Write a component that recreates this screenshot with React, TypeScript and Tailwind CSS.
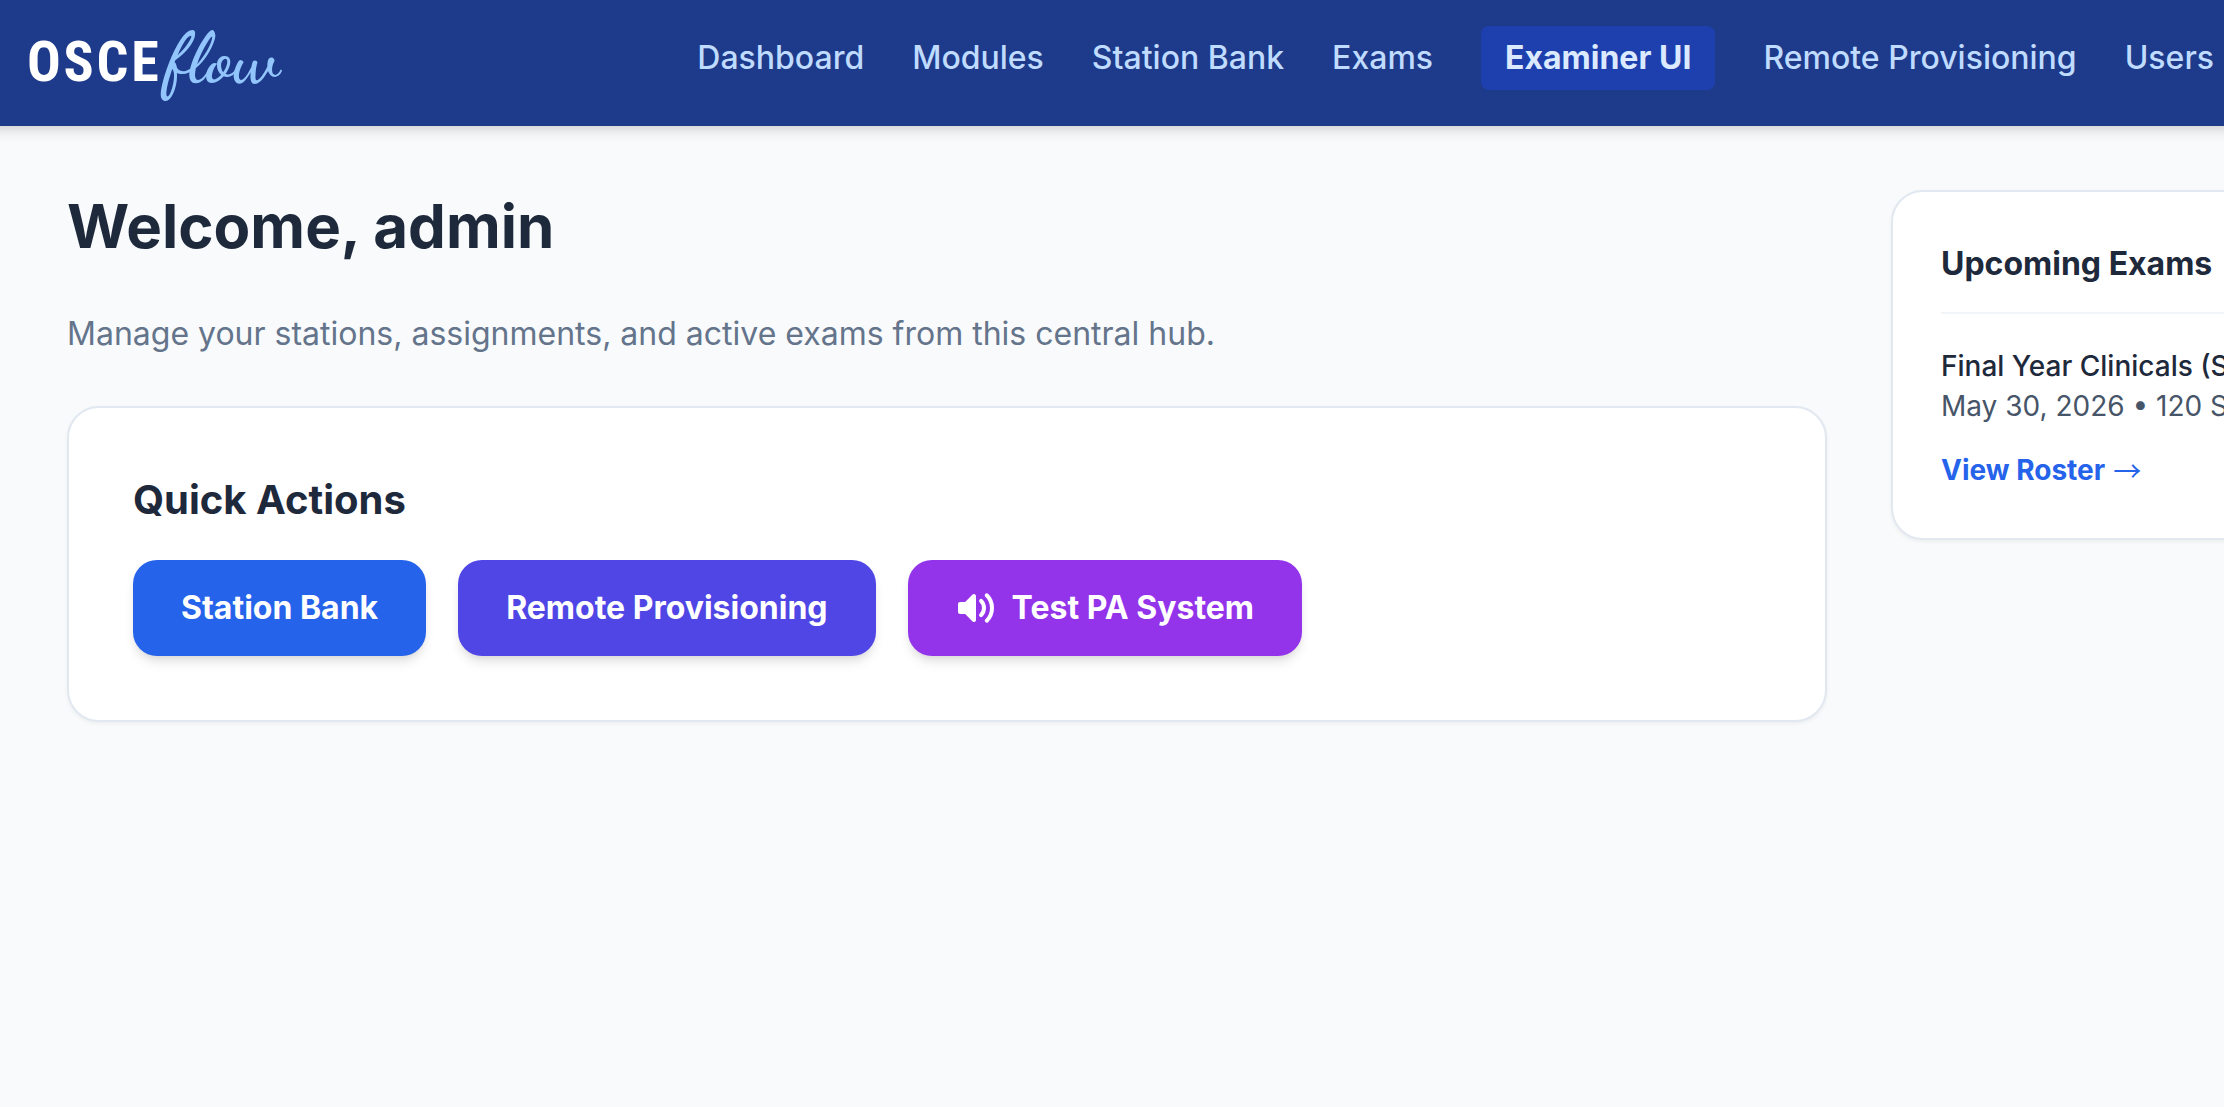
type NavItem = { label: string; active?: boolean };

const NAV_ITEMS: NavItem[] = [
  { label: "Dashboard" },
  { label: "Modules" },
  { label: "Station Bank" },
  { label: "Exams" },
  { label: "Examiner UI", active: true },
  { label: "Remote Provisioning" },
  { label: "Users" },
];

function Logo() {
  return (
    <a href="#home" aria-label="OSCEflow" className="flex items-baseline gap-1 pt-1 whitespace-nowrap leading-[72px]">
      <span className="font-['Roboto_Condensed',Roboto,sans-serif] text-[56px] font-bold tracking-wider text-white">
        OSCE
      </span>
      <span className="font-['Dancing_Script',cursive] text-[72px] font-bold text-[#93c5fd]">flow</span>
    </a>
  );
}

function Header() {
  return (
    <header className="relative -mx-4 flex h-[126px] items-center justify-between bg-[#1e3a8a] pr-[26px] pb-[10px] pl-[43px] shadow-[0_8px_12px_-2px_rgba(0,0,0,0.1),0_4px_8px_-4px_rgba(0,0,0,0.1)]">
      <Logo />
      <nav className="flex shrink-0 items-center gap-12 text-[32px] leading-[48px] whitespace-nowrap">
        {NAV_ITEMS.map((item) => (
          <a
            key={item.label}
            href="#"
            className={
              item.active
                ? "rounded-lg bg-[#1e40af] px-6 py-2 font-bold text-[#dbeafe]"
                : "font-medium text-[#bfdbfe]"
            }
          >
            {item.label}
          </a>
        ))}
      </nav>
    </header>
  );
}

function SpeakerIcon() {
  return (
    <svg viewBox="0 0 20 20" fill="currentColor" className="size-10" aria-hidden="true">
      <path
        fillRule="evenodd"
        clipRule="evenodd"
        d="M9.383 3.076A1 1 0 0110 4v12a1 1 0 01-1.707.707L4.586 13H2a1 1 0 01-1-1V8a1 1 0 011-1h2.586l3.707-3.707a1 1 0 011.09-.217zM14.657 2.929a1 1 0 011.414 0A9.972 9.972 0 0119 10a9.972 9.972 0 01-2.929 7.071 1 1 0 01-1.414-1.414A7.971 7.971 0 0017 10c0-2.21-.894-4.208-2.343-5.657a1 1 0 010-1.414zm-2.829 2.828a1 1 0 011.415 0A5.983 5.983 0 0115 10a5.984 5.984 0 01-1.757 4.243 1 1 0 01-1.415-1.415A3.984 3.984 0 0013 10a3.983 3.983 0 00-1.172-2.828 1 1 0 010-1.415z"
      />
    </svg>
  );
}

const ACTION =
  "flex items-center gap-4 rounded-3xl px-12 py-6 text-[32px] leading-[48px] font-bold text-white shadow-[0_8px_12px_-2px_rgba(0,0,0,0.1),0_4px_8px_-4px_rgba(0,0,0,0.1)]";

const CARD = "rounded-[32px] border-2 border-[#e2e8f0] bg-white shadow-[0_2px_4px_0_rgba(0,0,0,0.05)]";

export default function App() {
  return (
    <div className="min-h-screen overflow-x-clip bg-[#f8fafc] font-[Inter,sans-serif] text-[#1e293b]">
      <Header />
      <main className="grid grid-cols-[minmax(0,1fr)_333px] items-start gap-16 pt-16 pl-[67px]">
        <div>
          <h1 className="text-[60px] leading-[72px] font-bold">Welcome, admin</h1>
          <p className="mt-12 text-[32px] leading-[48px] text-[#64748b]">
            Manage your stations, assignments, and active exams from this central hub.
          </p>
          <section className={`${CARD} mt-12 p-16`}>
            <h2 className="text-[40px] leading-[56px] font-bold">Quick Actions</h2>
            <div className="mt-8 flex flex-wrap gap-8">
              <button type="button" className={`${ACTION} bg-[#2563eb]`}>
                Station Bank
              </button>
              <button type="button" className={`${ACTION} bg-[#4f46e5]`}>
                Remote Provisioning
              </button>
              <button type="button" className={`${ACTION} bg-[#9333ea]`}>
                <SpeakerIcon />
                Test PA System
              </button>
            </div>
          </section>
        </div>
        <aside className={`${CARD} w-[848px] p-12`}>
          <h2 className="border-b-2 border-[#f1f5f9] pb-6 text-[32px] leading-[48px] font-bold">
            Upcoming Exams
          </h2>
          <div className="mt-8 text-[28px] leading-[40px]">
            <p className="font-medium">Final Year Clinicals (S</p>
            <p className="text-[#475569]">May 30, 2026 • 120 S</p>
            <a href="#roster" className="mt-6 flex items-center gap-2 font-bold text-[#2563eb]">
              View Roster
              <span className="font-['Noto_Sans_CJK_JP',sans-serif] font-normal">→</span>
            </a>
          </div>
        </aside>
      </main>
    </div>
  );
}
